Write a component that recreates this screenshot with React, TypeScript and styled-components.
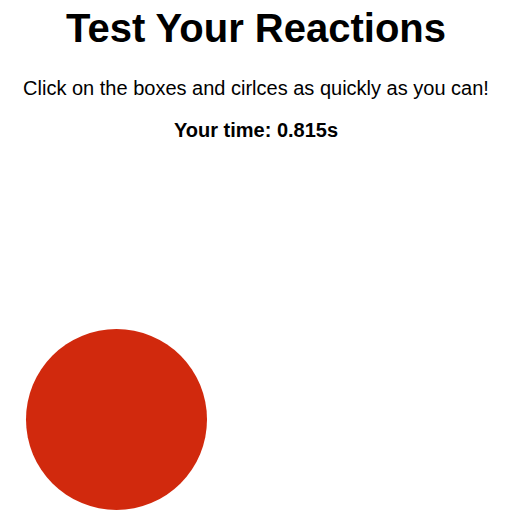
import React from "react";
import styled, { createGlobalStyle } from "styled-components";

const Global = createGlobalStyle`
  html, body { margin: 0; padding: 0; background: #fff; }
  body { font-family: "Liberation Sans", Arial, sans-serif; color: #000; }
`;

const Page = styled.main`
  width: 512px;
  height: 532px;
  display: flex;
  flex-direction: column;
  align-items: center;
  overflow: hidden;
`;

const Title = styled.h1`
  margin: 5px 0 0;
  font-size: 40px;
  line-height: 46px;
  font-weight: 700;
  text-align: center;
`;

const Instructions = styled.p`
  margin: 26px 0 0;
  font-size: 20px;
  line-height: 23px;
  text-align: center;
`;

const Time = styled.p`
  margin: 19px 0 0;
  font-size: 20px;
  line-height: 23px;
  font-weight: 700;
  text-align: center;
`;

const Arena = styled.div`
  position: relative;
  align-self: stretch;
  flex: 1;
`;

const Shape = styled.div<{ $size: number; $color: string; $round: boolean }>`
  position: absolute;
  width: ${(p) => p.$size}px;
  height: ${(p) => p.$size}px;
  background: ${(p) => p.$color};
  border-radius: ${(p) => (p.$round ? "50%" : "0")};
  cursor: pointer;
`;

export default function App() {
  const shape = { left: 26, top: 187, size: 181, color: "#d1290d", round: true };
  return (
    <>
      <Global />
      <Page>
        <Title>Test Your Reactions</Title>
        <Instructions>Click on the boxes and cirlces as quickly as you can!</Instructions>
        <Time>Your time: 0.815s</Time>
        <Arena>
          <Shape
            $size={shape.size}
            $color={shape.color}
            $round={shape.round}
            style={{ left: shape.left, top: shape.top }}
          />
        </Arena>
      </Page>
    </>
  );
}
